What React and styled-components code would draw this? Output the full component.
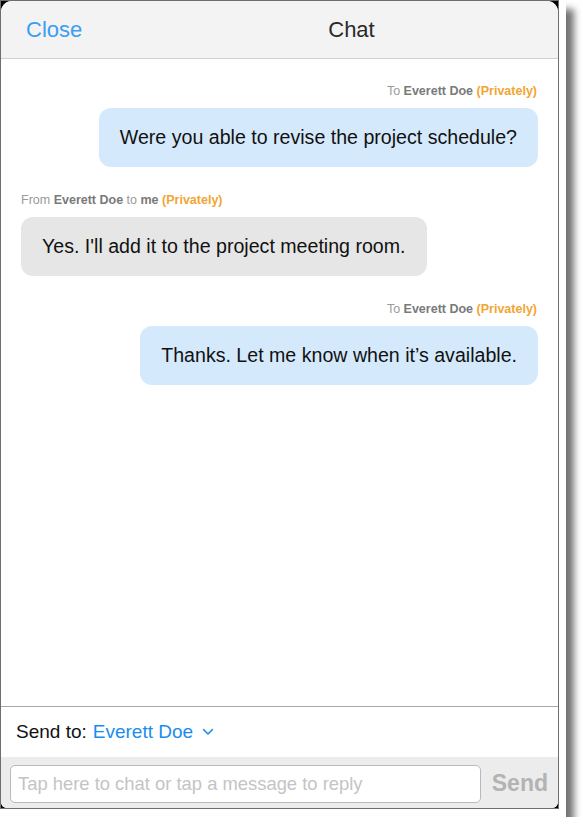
import React from "react";
import styled, { createGlobalStyle } from "styled-components";

const GlobalStyle = createGlobalStyle`
  body {
    margin: 0;
    background: #ffffff;
    font-family: "Liberation Sans", Arial, sans-serif;
  }
`;

const messages = [
  {
    id: 1,
    mine: true,
    text: "Were you able to revise the project schedule?",
  },
  {
    id: 2,
    mine: false,
    text: "Yes. I'll add it to the project meeting room.",
  },
  {
    id: 3,
    mine: true,
    text: "Thanks. Let me know when it\u2019s available.",
  },
];

const Chevron = () => (
  <svg width="12" height="8" viewBox="0 0 12 8">
    <path d="M1.5 1.5 L6 6 L10.5 1.5" fill="none" stroke="#1a8cf0" strokeWidth="1.6" strokeLinecap="round" strokeLinejoin="round" />
  </svg>
);

const App = () => {
  return (
    <>
      <GlobalStyle />
      <Matte>
        <Frame>
          <Screen>
            <Header>
              <CloseButton>Close</CloseButton>
              <Title>Chat</Title>
            </Header>
            <MessageList>
              {messages.map((m) => (
                <MessageGroup key={m.id} mine={m.mine}>
                  <Meta>
                    {m.mine ? (
                      <>
                        To <Name>Everett Doe</Name> <Private>(Privately)</Private>
                      </>
                    ) : (
                      <>
                        From <Name>Everett Doe</Name> to <Name>me</Name>{" "}
                        <Private>(Privately)</Private>
                      </>
                    )}
                  </Meta>
                  <Bubble mine={m.mine}>{m.text}</Bubble>
                </MessageGroup>
              ))}
            </MessageList>
            <SendToRow>
              Send to:
              <Recipient>
                Everett Doe <Chevron />
              </Recipient>
            </SendToRow>
            <InputBar>
              <InputBox placeholder="Tap here to chat or tap a message to reply" />
              <SendButton>Send</SendButton>
            </InputBar>
          </Screen>
        </Frame>
      </Matte>
    </>
  );
};

export default App;

const Matte = styled.div`
  width: 566px;
  height: 817px;
  background: #ffffff;
  box-shadow: 8px 9px 7px rgba(0, 0, 0, 0.55);
`;

const Frame = styled.div`
  width: 559px;
  height: 809px;
  box-sizing: border-box;
  border: 1px solid #6e6e6e;
  background: #000;
`;

const Screen = styled.div`
  display: flex;
  flex-direction: column;
  height: 100%;
  background: #fff;
  border-radius: 11px 11px 6px 6px;
  overflow: hidden;
`;

const Header = styled.div`
  display: flex;
  align-items: center;
  height: 57px;
  flex-shrink: 0;
  background: #f3f3f3;
  border-bottom: 1px solid #cfcfcf;
  padding-left: 25px;
`;

const CloseButton = styled.div`
  font-size: 22px;
  color: #3a9ef2;
  margin-top: 1px;
`;

const Title = styled.div`
  font-size: 22px;
  color: #2a2a2a;
  margin-left: 246px;
  margin-top: 1px;
`;

const MessageList = styled.div`
  flex: 1;
  display: flex;
  flex-direction: column;
  gap: 25px;
  padding: 24px 20px 0 20px;
`;

const MessageGroup = styled.div`
  display: flex;
  flex-direction: column;
  align-items: ${({ mine }) => (mine ? "flex-end" : "flex-start")};
`;

const Meta = styled.div`
  font-size: 12.5px;
  line-height: 16px;
  color: #9a9a9a;
  margin-bottom: 9px;
  margin-right: 1px;
`;

const Name = styled.span`
  font-weight: bold;
  color: #7a7a7a;
`;

const Private = styled.span`
  font-weight: bold;
  color: #f2a533;
`;

const Bubble = styled.div`
  font-size: 19.6px;
  line-height: 23px;
  color: #111;
  padding: 18px 21px 18px 21px;
  border-radius: 12px;
  background: ${({ mine }) => (mine ? "#d5e9fc" : "#e6e6e6")};
`;

const SendToRow = styled.div`
  display: flex;
  align-items: center;
  gap: 6px;
  height: 51px;
  box-sizing: border-box;
  flex-shrink: 0;
  border-top: 1px solid #a8a8a8;
  padding-left: 15px;
  font-size: 19px;
  color: #111;
`;

const Recipient = styled.div`
  display: flex;
  align-items: center;
  gap: 9px;
  color: #1a8cf0;
`;

const InputBar = styled.div`
  display: flex;
  align-items: center;
  gap: 11px;
  height: 51px;
  flex-shrink: 0;
  background: #ececec;
  padding: 2px 10px 0 9px;
  box-sizing: border-box;
`;

const InputBox = styled.input`
  width: 471px;
  height: 38px;
  box-sizing: border-box;
  border: 1px solid #b9b9b9;
  border-radius: 5px;
  background: #fff;
  padding: 0 7px;
  font-family: "Liberation Sans", Arial, sans-serif;
  font-size: 18.4px;
  outline: none;
  &::placeholder {
    color: #c4c4c4;
  }
`;

const SendButton = styled.div`
  font-size: 23px;
  font-weight: bold;
  color: #b3b3b3;
`;
